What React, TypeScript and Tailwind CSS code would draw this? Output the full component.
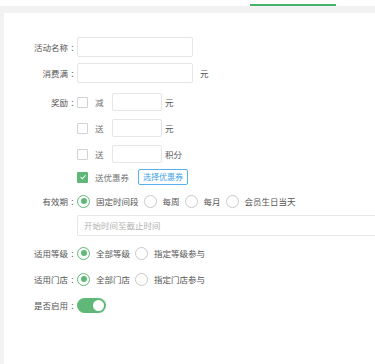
import React from "react";

const font = {
  fontFamily: '"Noto Sans CJK SC", "Noto Sans", sans-serif',
};

function Label({ text }: { text: string }) {
  return (
    <div className="w-[73px] shrink-0 flex justify-end items-center text-[8.5px] text-[#555]">
      <span>{text}</span>
      <span className="w-[9px] text-center">:</span>
    </div>
  );
}

function Checkbox({ checked = false }: { checked?: boolean }) {
  if (checked) {
    return (
      <div className="w-[11px] h-[11px] rounded-[1px] bg-[#5fb878] flex items-center justify-center">
        <svg width="8" height="8" viewBox="0 0 10 10">
          <path d="M2 5.2 L4.2 7.3 L8.2 2.8" stroke="#fff" strokeWidth="1.3" fill="none" />
        </svg>
      </div>
    );
  }
  return <div className="w-[11px] h-[11px] rounded-[1px] border border-[#d2d2d2] bg-white" />;
}

function Radio({ checked = false, text }: { checked?: boolean; text: string }) {
  return (
    <div className="flex items-center gap-[6px] mr-[5px]">
      {checked ? (
        <div className="w-[13px] h-[13px] rounded-full border border-[#5fb878] flex items-center justify-center">
          <div className="w-[6px] h-[6px] rounded-full bg-[#5fb878]" />
        </div>
      ) : (
        <div className="w-[13px] h-[13px] rounded-full border border-[#c9c9c9]" />
      )}
      <span className="text-[8.5px] text-[#555]">{text}</span>
    </div>
  );
}

function RewardRow({
  label,
  unit,
  className = "",
}: {
  label: string;
  unit: string;
  className?: string;
}) {
  return (
    <div className={`flex items-center h-[18px] ${className}`}>
      <div className="w-[35px] flex items-center">
        <Checkbox />
        <span className="ml-[7px] text-[8.5px] text-[#777]">{label}</span>
      </div>
      <div className="w-[50px] h-[18px] border border-[#e6e6e6] rounded-[2px] bg-white" />
      <span className="ml-[3px] text-[8.5px] text-[#555]">{unit}</span>
    </div>
  );
}

export default function App() {
  return (
    <div className="w-[375px] h-[364px] bg-[#f2f2f2] flex flex-col overflow-hidden" style={font}>
      {/* tabs */}
      <div className="h-[6px] bg-white shrink-0">
        <div className="ml-[250px] mt-[4px] w-[86px] h-[2px] bg-[#46b46a]" />
      </div>

      {/* card */}
      <div className="mt-[7px] ml-[4px] flex-1 bg-white pt-[24px]">
        <div className="flex items-center h-[20px]">
          <Label text="活动名称" />
          <div className="w-[116px] h-[20px] border border-[#e6e6e6] rounded-[2px]" />
        </div>

        <div className="flex items-center h-[20px] mt-[6px]">
          <Label text="消费满" />
          <div className="w-[116px] h-[20px] border border-[#e6e6e6] rounded-[2px]" />
          <span className="ml-[7px] text-[8.5px] text-[#555]">元</span>
        </div>

        <div className="flex mt-[10px]">
          <div className="h-[18px] flex items-center">
            <Label text="奖励" />
          </div>
          <div className="flex flex-col">
            <RewardRow label="减" unit="元" />
            <RewardRow label="送" unit="元" className="mt-[8px]" />
            <RewardRow label="送" unit="积分" className="mt-[8px]" />
            <div className="flex items-center h-[16px] mt-[6px]">
              <Checkbox checked />
              <span className="ml-[7px] text-[8.5px] text-[#777]">送优惠券</span>
              <div className="ml-[9px] w-[50px] h-[16px] border border-[#5ab0ee] rounded-[2px] flex items-center justify-center text-[8px] text-[#3c9fe6]">
                选择优惠券
              </div>
            </div>
          </div>
        </div>

        <div className="flex items-center h-[16px] mt-[8px]">
          <Label text="有效期" />
          <div className="flex items-center">
            <Radio checked text="固定时间段" />
            <Radio text="每周" />
            <Radio text="每月" />
            <Radio text="会员生日当天" />
          </div>
        </div>

        <div className="flex mt-[6px]">
          <div className="w-[73px] shrink-0" />
          <div className="flex-1 h-[21px] border border-[#e6e6e6] border-r-0 rounded-l-[2px] flex items-center pl-[6px] text-[8.5px] text-[#b2b2b2]">
            开始时间至截止时间
          </div>
        </div>

        <div className="flex items-center h-[16px] mt-[9px]">
          <Label text="适用等级" />
          <Radio checked text="全部等级" />
          <Radio text="指定等级参与" />
        </div>

        <div className="flex items-center h-[16px] mt-[10px]">
          <Label text="适用门店" />
          <Radio checked text="全部门店" />
          <Radio text="指定门店参与" />
        </div>

        <div className="flex items-center h-[16px] mt-[10px]">
          <Label text="是否启用" />
          <div className="w-[29px] h-[15px] rounded-full bg-[#5fb878] flex items-center justify-end pr-[2px]">
            <div className="w-[11px] h-[11px] rounded-full bg-white" />
          </div>
        </div>
      </div>
    </div>
  );
}
